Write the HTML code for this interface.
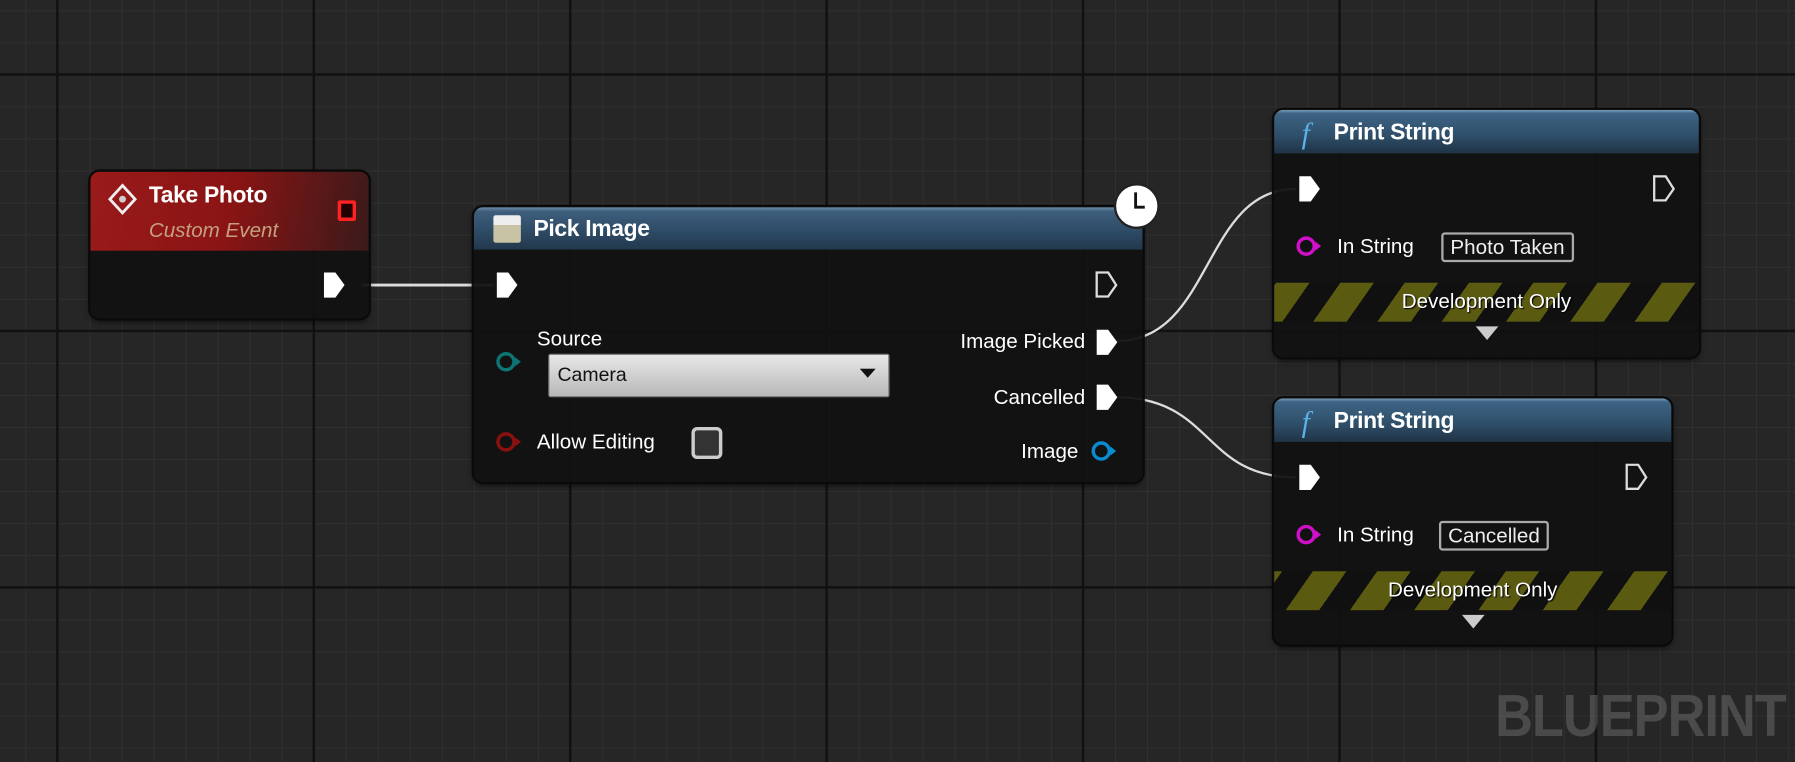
<!DOCTYPE html>
<html><head><meta charset="utf-8"><style>
html,body{margin:0;padding:0;width:1795px;height:762px;overflow:hidden;background:#262626}
#w{position:absolute;left:0;top:0;width:1568px;height:666px;transform:scale(1.14477);transform-origin:0 0;
font-family:"Liberation Sans",sans-serif;color:#fff;
background:
linear-gradient(90deg,#111 0 2px,transparent 2px) 49px 0/224px 224px,
linear-gradient(180deg,#111 0 2px,transparent 2px) 0 64px/224px 224px,
linear-gradient(90deg,#303030 0 1px,transparent 1px) 22px 0/28px 28px,
linear-gradient(180deg,#303030 0 1px,transparent 1px) 0 9px/28px 28px,
#262626}
.node{position:absolute;background:rgba(16,17,16,.95);border-radius:8px;box-shadow:0 0 0 2px #0a0a0a,0 3px 6px rgba(0,0,0,.6);overflow:hidden}
.hdr{position:absolute;left:0;right:0;top:0}
.blue{background:linear-gradient(180deg,#7aa0bd 0,#3d6484 8%,#2e4e68 60%,#1f3345 100%)}
.t{position:absolute;font-weight:bold;font-size:20px;white-space:nowrap;letter-spacing:-0.3px}
.l{position:absolute;font-size:18px;white-space:nowrap}
.ab{position:absolute}
.stripe{position:absolute;left:0;right:0;height:34px;background:repeating-linear-gradient(-55deg,#101010 0 22px,#5a5a10 22px 46px)}
.dev{position:absolute;left:0;right:0;text-align:center;font-size:18px;text-shadow:1px 1px 1px #000}
.box{position:absolute;border:2px solid #aaa;border-radius:3px;font-size:18px;padding:0 6px;line-height:22px;color:#eee}
</style></head><body><div id="w">
<svg class="ab" style="left:0;top:0" width="1568" height="666">
<path d="M316 249 H432" stroke="#ddd" stroke-width="2.5" fill="none"/>
<path d="M975 298 C1060 298,1050 165,1132 165" stroke="#ddd" stroke-width="2" fill="none"/>
<path d="M975 347 C1060 347,1050 417,1132 417" stroke="#ddd" stroke-width="2" fill="none"/>
</svg>

<div class="node" style="left:79px;top:150px;width:243px;height:128px">
<div class="hdr" style="height:69px;background:linear-gradient(100deg,#9a1a1a 0,#8a1414 50%,#3a1a1a 100%)"></div>
<svg class="ab" style="left:14px;top:9px" width="28" height="30"><path d="M14 3 L25 15 L14 27 L3 15Z" fill="none" stroke="#eee" stroke-width="2.5"/><circle cx="14" cy="15" r="3" fill="#ccc"/></svg>
<div class="t" style="left:51px;top:10px">Take Photo</div>
<div class="l" style="left:51px;top:41px;font-style:italic;color:#c4a080">Custom Event</div>
<div class="ab" style="left:216px;top:25px;width:10px;height:12px;border:3px solid #f22;border-radius:2px;background:#200"></div>
<svg class="ab" style="left:202px;top:87px" width="22" height="24"><path d="M2 1 H12 L20 12 L12 23 H2Z" fill="#fff"/></svg>
</div>

<div class="node" style="left:414px;top:181px;width:584px;height:240px">
<div class="hdr" style="height:37px;background:linear-gradient(180deg,#6f90ab 0,#3e5e7c 10%,#2d4a64 60%,#22384c 100%)"></div>
<div class="ab" style="left:17px;top:7px;width:24px;height:24px;background:linear-gradient(#eee 0 35%,#c8c3a4 35%);border-radius:2px"></div>
<div class="t" style="left:52px;top:8px">Pick Image</div>
<svg class="ab" style="left:18px;top:56px" width="22" height="24"><path d="M2 1 H12 L20 12 L12 23 H2Z" fill="#fff"/></svg>
<svg class="ab" style="left:542px;top:56px" width="22" height="24"><path d="M2 1 H12 L19 12 L12 22 H2Z" fill="none" stroke="#ddd" stroke-width="2"/></svg>
<div class="l" style="left:55px;top:105px">Source</div>
<svg class="ab" style="left:18px;top:124px" width="28" height="22"><circle cx="10" cy="11" r="7" fill="none" stroke="#0d7474" stroke-width="3"/><path d="M18 7 L23 11 L18 15Z" fill="#0d7474"/></svg>
<div class="ab" style="left:65px;top:128px;width:296px;height:36px;border:1px solid #888;background:linear-gradient(#e8e8e8,#b8b8b8);border-radius:2px"></div>
<div class="l" style="left:73px;top:137px;color:#111;font-size:17px">Camera</div>
<svg class="ab" style="left:337px;top:141px" width="14" height="10"><path d="M0 0 H14 L7 8Z" fill="#111"/></svg>
<svg class="ab" style="left:18px;top:194px" width="28" height="22"><circle cx="10" cy="11" r="7" fill="none" stroke="#8a1010" stroke-width="3"/><path d="M18 7 L23 11 L18 15Z" fill="#8a1010"/></svg>
<div class="l" style="left:55px;top:195px">Allow Editing</div>
<div class="ab" style="left:190px;top:192px;width:21px;height:22px;border:3px solid #ccc;border-radius:5px;background:#333"></div>
<div class="l" style="right:50px;top:107px">Image Picked</div>
<svg class="ab" style="left:542px;top:106px" width="22" height="24"><path d="M2 1 H12 L20 12 L12 23 H2Z" fill="#fff"/></svg>
<div class="l" style="right:50px;top:156px">Cancelled</div>
<svg class="ab" style="left:542px;top:154px" width="22" height="24"><path d="M2 1 H12 L20 12 L12 23 H2Z" fill="#fff"/></svg>
<div class="l" style="right:56px;top:203px">Image</div>
<svg class="ab" style="left:538px;top:202px" width="28" height="22"><circle cx="10" cy="11" r="7" fill="none" stroke="#0a8ad0" stroke-width="3"/><path d="M18 7 L23 11 L18 15Z" fill="#0a8ad0"/></svg>
</div>
<svg class="ab" style="left:972px;top:159px" width="44" height="44"><circle cx="21" cy="21" r="19" fill="#fff" stroke="#222" stroke-width="2"/><path d="M20 9 V22 H28" stroke="#111" stroke-width="2.5" fill="none"/></svg>

<div class="node" style="left:1113px;top:96px;width:371px;height:216px">
<div class="hdr blue" style="height:38px"></div>
<div class="t" style="left:24px;top:6px;font-family:'Liberation Serif',serif;font-style:italic;color:#5ab0e8;font-size:26px;font-weight:normal">f</div>
<div class="t" style="left:52px;top:9px">Print String</div>
<svg class="ab" style="left:20px;top:57px" width="22" height="24"><path d="M2 1 H12 L20 12 L12 23 H2Z" fill="#fff"/></svg>
<svg class="ab" style="left:330px;top:57px" width="22" height="24"><path d="M2 1 H12 L19 12 L12 22 H2Z" fill="none" stroke="#ddd" stroke-width="2"/></svg>
<svg class="ab" style="left:18px;top:108px" width="28" height="22"><circle cx="10" cy="11" r="7" fill="#111" stroke="#d010c8" stroke-width="3"/><path d="M18 7 L23 11 L18 15Z" fill="#d010c8"/></svg>
<div class="l" style="left:55px;top:109px">In String</div>
<div class="box" style="left:146px;top:107px">Photo Taken</div>
<div class="stripe" style="top:151px"></div>
<div class="dev" style="top:157px">Development Only</div>
<svg class="ab" style="left:176px;top:189px" width="20" height="14"><path d="M0 0 H20 L10 12Z" fill="#ccc"/></svg>
</div>

<div class="node" style="left:1113px;top:348px;width:347px;height:215px">
<div class="hdr blue" style="height:38px"></div>
<div class="t" style="left:24px;top:6px;font-family:'Liberation Serif',serif;font-style:italic;color:#5ab0e8;font-size:26px;font-weight:normal">f</div>
<div class="t" style="left:52px;top:9px">Print String</div>
<svg class="ab" style="left:20px;top:57px" width="22" height="24"><path d="M2 1 H12 L20 12 L12 23 H2Z" fill="#fff"/></svg>
<svg class="ab" style="left:306px;top:57px" width="22" height="24"><path d="M2 1 H12 L19 12 L12 22 H2Z" fill="none" stroke="#ddd" stroke-width="2"/></svg>
<svg class="ab" style="left:18px;top:108px" width="28" height="22"><circle cx="10" cy="11" r="7" fill="#111" stroke="#d010c8" stroke-width="3"/><path d="M18 7 L23 11 L18 15Z" fill="#d010c8"/></svg>
<div class="l" style="left:55px;top:109px">In String</div>
<div class="box" style="left:144px;top:107px">Cancelled</div>
<div class="stripe" style="top:151px"></div>
<div class="dev" style="top:157px">Development Only</div>
<svg class="ab" style="left:164px;top:189px" width="20" height="14"><path d="M0 0 H20 L10 12Z" fill="#ccc"/></svg>
</div>

<div class="ab" style="left:1306px;top:596px;font-size:52px;font-weight:bold;color:rgba(120,120,120,.45);letter-spacing:-1px;transform:scaleX(0.88);transform-origin:0 0">BLUEPRINT</div>
</div></body></html>
